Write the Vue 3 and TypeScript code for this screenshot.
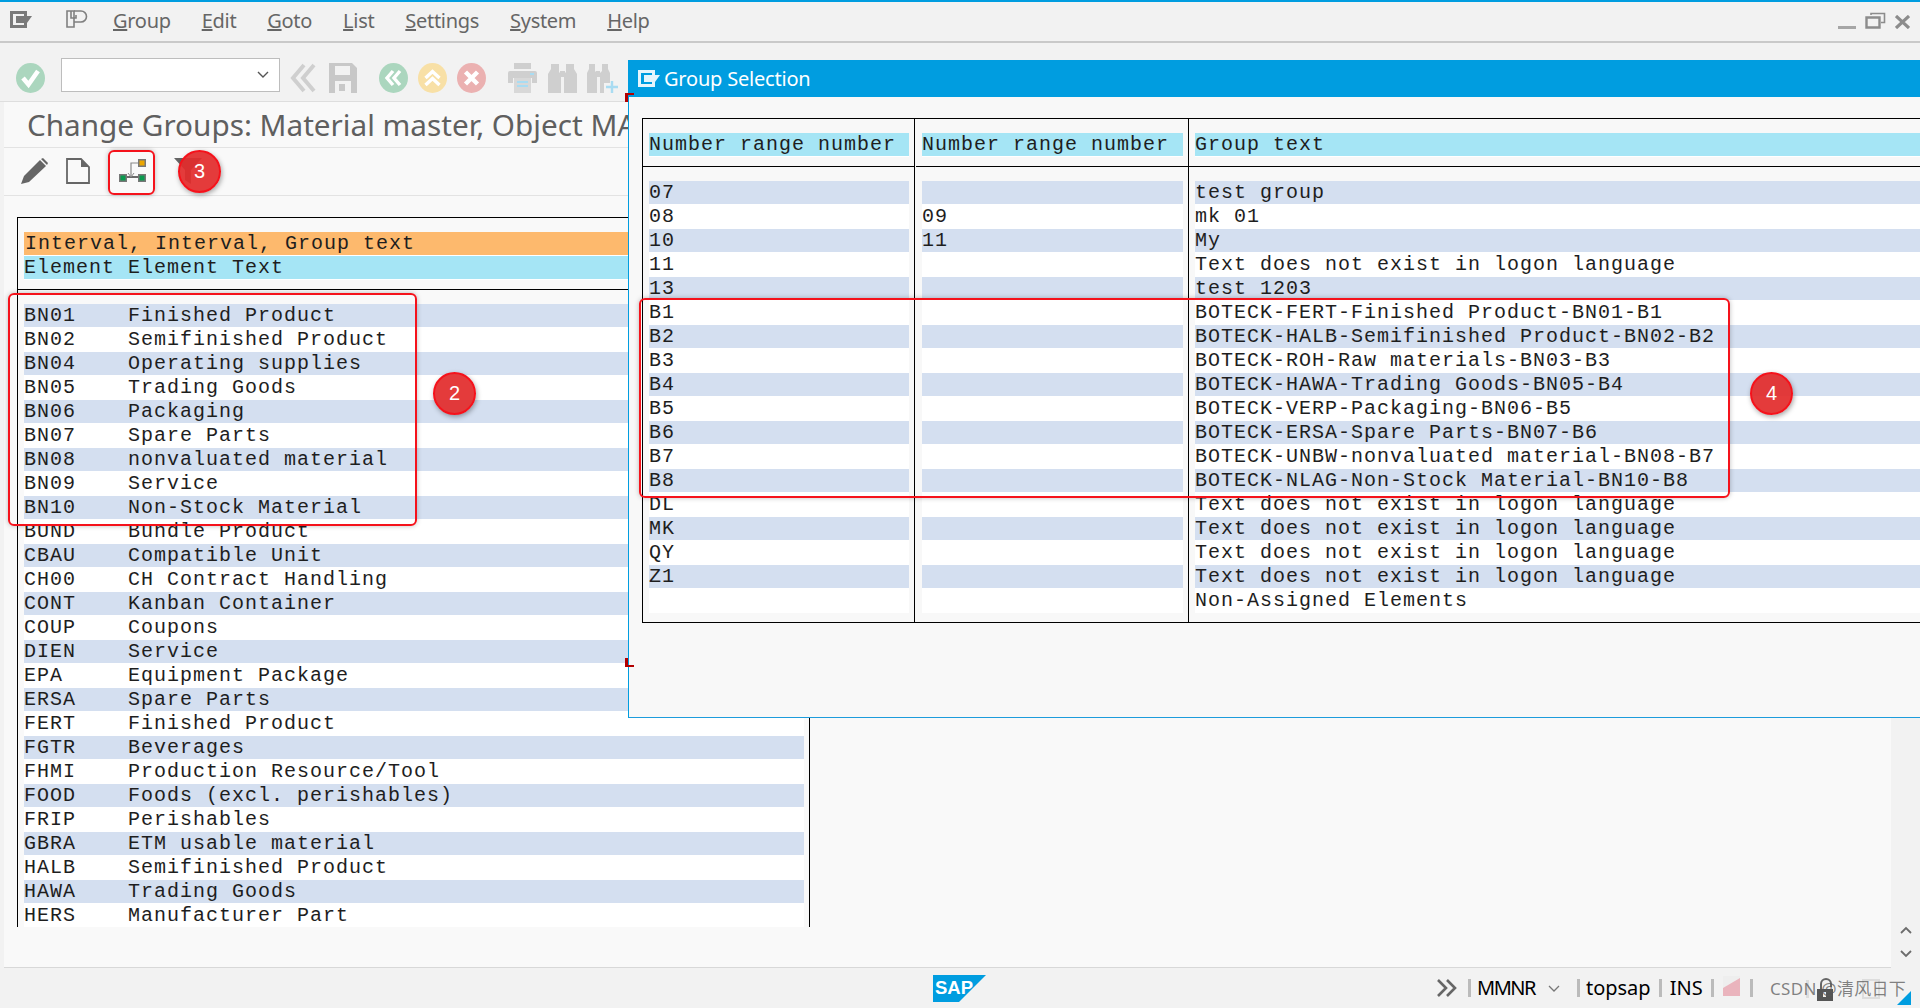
<script setup lang="ts">
interface DialogRow { a: string; b: string; c: string }

const menus: string[] = ['Group', 'Edit', 'Goto', 'List', 'Settings', 'System', 'Help']

const leftRows: string[] = [
  'BN01    Finished Product', 'BN02    Semifinished Product', 'BN04    Operating supplies',
  'BN05    Trading Goods', 'BN06    Packaging', 'BN07    Spare Parts', 'BN08    nonvaluated material',
  'BN09    Service', 'BN10    Non-Stock Material', 'BUND    Bundle Product', 'CBAU    Compatible Unit',
  'CH00    CH Contract Handling', 'CONT    Kanban Container', 'COUP    Coupons', 'DIEN    Service',
  'EPA     Equipment Package', 'ERSA    Spare Parts', 'FERT    Finished Product', 'FGTR    Beverages',
  'FHMI    Production Resource/Tool', 'FOOD    Foods (excl. perishables)', 'FRIP    Perishables',
  'GBRA    ETM usable material', 'HALB    Semifinished Product', 'HAWA    Trading Goods', 'HERS    Manufacturer Part',
]

const noText = 'Text does not exist in logon language'
const dialogRows: DialogRow[] = [
  { a: '07', b: '', c: 'test group' }, { a: '08', b: '09', c: 'mk 01' }, { a: '10', b: '11', c: 'My' },
  { a: '11', b: '', c: noText }, { a: '13', b: '', c: 'test 1203' },
  { a: 'B1', b: '', c: 'BOTECK-FERT-Finished Product-BN01-B1' },
  { a: 'B2', b: '', c: 'BOTECK-HALB-Semifinished Product-BN02-B2' },
  { a: 'B3', b: '', c: 'BOTECK-ROH-Raw materials-BN03-B3' },
  { a: 'B4', b: '', c: 'BOTECK-HAWA-Trading Goods-BN05-B4' },
  { a: 'B5', b: '', c: 'BOTECK-VERP-Packaging-BN06-B5' },
  { a: 'B6', b: '', c: 'BOTECK-ERSA-Spare Parts-BN07-B6' },
  { a: 'B7', b: '', c: 'BOTECK-UNBW-nonvaluated material-BN08-B7' },
  { a: 'B8', b: '', c: 'BOTECK-NLAG-Non-Stock Material-BN10-B8' },
  { a: 'DL', b: '', c: noText }, { a: 'MK', b: '', c: noText }, { a: 'QY', b: '', c: noText }, { a: 'Z1', b: '', c: noText },
  { a: '', b: '', c: 'Non-Assigned Elements' },
]

const dialogCols: { key: keyof DialogRow; head: string; cls: string }[] = [
  { key: 'a', head: 'Number range number', cls: 'c1' },
  { key: 'b', head: 'Number range number', cls: 'c2' },
  { key: 'c', head: 'Group text', cls: 'c3' },
]
</script>

<template>
  <div class="app">
    <div class="topline"></div>

    <header class="menubar">
      <svg class="m-ico1" width="22" height="17" viewBox="0 0 22 17">
        <path d="M1.5 1.5h14v14h-14z" fill="#f2f2f2" stroke="#7a7a7a" stroke-width="3" />
        <path d="M6 5h16l-5 7H6z" fill="#7a7a7a" />
      </svg>
      <svg class="m-ico2" width="22" height="18" viewBox="0 0 22 18" fill="none" stroke="#808080" stroke-width="1.6">
        <path d="M1 1h7v16H1z" />
        <path d="M8 1h7a5.5 5.5 0 0 1 0 11H8" />
        <path d="M5 1v7h5V5" />
      </svg>
      <nav class="menus">
        <span v-for="m in menus" :key="m" class="menu"><u>{{ m[0] }}</u>{{ m.slice(1) }}</span>
      </nav>
      <div class="winctl">
        <svg width="18" height="4" viewBox="0 0 18 4"><rect width="18" height="3" y="1" fill="#a6a6a6" /></svg>
        <svg width="21" height="17" viewBox="0 0 21 17" fill="none" stroke="#8c8c8c" stroke-width="2.4">
          <path d="M1.5 5.5h13v10h-13z" /><path d="M6 3V1.5h13.5v9H16" stroke-width="1.6" />
        </svg>
        <svg width="15" height="14" viewBox="0 0 15 14" fill="none" stroke="#8c8c8c" stroke-width="3.2">
          <path d="M1 1l13 12M14 1L1 13" />
        </svg>
      </div>
    </header>
    <div class="menushadow"></div>

    <div class="toolbar">
      <svg class="ic" width="29" height="30" viewBox="0 0 29 30">
        <ellipse cx="14.5" cy="15" rx="14.5" ry="15" fill="#abd6be" />
        <path d="M7 15l5.5 6.5L22 8" fill="none" stroke="#fff" stroke-width="4.6" />
      </svg>
      <div class="combo">
        <svg width="12" height="8" viewBox="0 0 12 8" fill="none" stroke="#555" stroke-width="1.4"><path d="M1 1l5 5 5-5" /></svg>
      </div>
      <svg class="ic back" width="26" height="30" viewBox="0 0 26 30" fill="none" stroke="#cfcfcf" stroke-width="4">
        <path d="M14 2L3 15l11 13M24 2L13 15l11 13" />
      </svg>
      <svg class="ic save" width="28" height="30" viewBox="0 0 28 30">
        <path d="M0 0h23l5 5v25H0z" fill="#c8c8c8" />
        <path d="M6 3h15v9H6z" fill="#f2f2f2" />
        <path d="M6 18h16v12H6z" fill="#f2f2f2" />
        <path d="M10 21h6v7h-6z" fill="#c8c8c8" />
      </svg>
      <svg class="ic nav1" width="29" height="30" viewBox="0 0 29 30">
        <ellipse cx="14.5" cy="15" rx="14.5" ry="15" fill="#abd6be" />
        <path d="M14 8l-6 7 6 7M21 8l-6 7 6 7" fill="none" stroke="#fff" stroke-width="3.4" />
      </svg>
      <svg class="ic nav2" width="29" height="30" viewBox="0 0 29 30">
        <ellipse cx="14.5" cy="15" rx="14.5" ry="15" fill="#f8e0a6" />
        <path d="M7.5 15l7-6.5 7 6.5M7.5 22l7-6.5 7 6.5" fill="none" stroke="#fff" stroke-width="3.4" />
      </svg>
      <svg class="ic nav2" width="29" height="30" viewBox="0 0 29 30">
        <ellipse cx="14.5" cy="15" rx="14.5" ry="15" fill="#ebb1b1" />
        <path d="M8.5 9l12 12M20.5 9l-12 12" fill="none" stroke="#fff" stroke-width="4.4" />
      </svg>
      <svg class="ic print" width="29" height="30" viewBox="0 0 29 30">
        <path d="M6 0h17v6H6z" fill="#cfcfcf" />
        <path d="M2 8h25a2 2 0 0 1 2 2v10h-5v-5H5v5H0V10a2 2 0 0 1 2-2z" fill="#cfcfcf" />
        <path d="M6 15h17v15H6z" fill="#d8d8d8" />
        <path d="M9 19h11M9 23h11" stroke="#a9dcf2" stroke-width="2" />
        <path d="M22 10h4v2h-4z" fill="#a9dcf2" />
      </svg>
      <svg class="ic bino" width="29" height="30" viewBox="0 0 29 30" fill="#cfcfcf">
        <path d="M3 1h8v8l2 2v19H0V11l3-5z" />
        <path d="M18 1h8v5l3 5v19H16V11l2-2z" />
        <path d="M12 8h5v6h-5z" />
      </svg>
      <svg class="ic bino2" width="33" height="30" viewBox="0 0 33 30">
        <g fill="#cfcfcf">
          <path d="M2 1h6v7l2 2v20H0V10l2-4z" />
          <path d="M15 1h6v5l2 4v10h-6v10h-4V10l2-2z" />
          <path d="M9 8h4v6H9z" />
        </g>
        <path d="M25 18v12M19 24h12" stroke="#a9dcf2" stroke-width="2.4" />
      </svg>
    </div>

    <div class="workspace">
      <main class="main">
        <h1 class="title">Change Groups: Material master, Object MA</h1>
        <div class="apptools">
          <svg class="pencil" width="27" height="26" viewBox="0 0 27 26">
            <path d="M19 2l6 6L8 24 0 26l3-8z" fill="#666" />
            <path d="M20 1l2-1 5 5-1 2z" fill="#666" />
          </svg>
          <svg class="doc" width="24" height="26" viewBox="0 0 24 26" fill="none" stroke="#666" stroke-width="1.8">
            <path d="M1 1h14l8 8v16H1z" />
            <path d="M15 1l8 8h-8z" fill="#666" stroke="none" />
          </svg>
          <svg class="tree" width="27" height="25" viewBox="0 0 27 25">
            <path d="M12 19V5h8" fill="none" stroke="#8a8a8a" stroke-width="1.2" />
            <path d="M4 19h20" stroke="#6a6a6a" stroke-width="2" />
            <path d="M9 15l3 4 3-4" fill="none" stroke="#8a8a8a" stroke-width="1" />
            <rect x="19" y="1" width="8" height="8" fill="#777" /><rect x="20.5" y="2.5" width="5" height="5" fill="#eba600" />
            <rect y="16" width="8" height="8" fill="#777" /><rect x="1.5" y="17.5" width="5" height="5" fill="#0a9a4e" />
            <rect x="19" y="16" width="8" height="8" fill="#777" /><rect x="20.5" y="17.5" width="5" height="5" fill="#0a9a4e" />
          </svg>
          <svg class="filter" width="28" height="26" viewBox="0 0 28 26">
            <path d="M0 0h28L17 12v14l-6-4V12z" fill="#666" />
          </svg>
        </div>

        <section class="listing">
          <div class="ltable">
            <div class="lhead">
              <div class="cell orange">Interval, Interval, Group text</div>
              <div class="cell cyan">Element Element Text</div>
            </div>
            <div class="lbody">
              <div v-for="(r, i) in leftRows" :key="r" class="cell" :class="i % 2 === 0 ? 'alt' : 'plain'">{{ r }}</div>
            </div>
          </div>
        </section>
      </main>
      <aside class="scroll">
        <svg width="12" height="8" viewBox="0 0 12 8" fill="none" stroke="#6c6c6c" stroke-width="1.8"><path d="M1 7l5-5 5 5" /></svg>
        <svg width="12" height="8" viewBox="0 0 12 8" fill="none" stroke="#6c6c6c" stroke-width="1.8"><path d="M1 1l5 5 5-5" /></svg>
      </aside>
    </div>

    <footer class="status">
      <svg class="sap" width="53" height="27" viewBox="0 0 53 27">
        <path d="M0 0h53L26 27H0z" fill="#009de0" />
        <text x="2" y="19" font-family="Liberation Sans, sans-serif" font-size="18" font-weight="700" textLength="38" lengthAdjust="spacingAndGlyphs" fill="#fff">SAP</text>
      </svg>
      <svg class="chev" width="20" height="20" viewBox="0 0 20 20" fill="none" stroke="#666" stroke-width="2.6">
        <path d="M1 2l8 8-8 8M10 2l8 8-8 8" />
      </svg>
      <i class="sep s1"></i>
      <span class="st mm">MMNR</span>
      <svg class="dd" width="12" height="7" viewBox="0 0 12 7" fill="none" stroke="#777" stroke-width="1.3"><path d="M1 1l5 5 5-5" /></svg>
      <i class="sep s2"></i>
      <span class="st top">topsap</span>
      <i class="sep s3"></i>
      <span class="st ins">INS</span>
      <i class="sep s3"></i>
      <svg class="flag" width="17" height="20" viewBox="0 0 17 20"><path d="M0 0h17v20H0z" fill="#eee" /><path d="M0 20V12L17 2v18z" fill="#eab4bd" /></svg>
      <i class="sep s4"></i>
    </footer>

    <span class="tri"></span>
    <i class="fade-sep"></i>
    <i class="fade-box"></i>
    <svg class="lock" width="16" height="23" viewBox="0 0 16 23">
      <path d="M4 12V6a5 5 0 0 1 10 0v3" fill="none" stroke="#666" stroke-width="2" />
      <path d="M0 11h16v12H0z" fill="#555" /><path d="M6 14h3v5H6z" fill="#f2f2f2" />
    </svg>
    <span class="watermark">CSDN @清风日下</span>

    <section class="dialog">
      <div class="dlg-title">
        <svg width="22" height="17" viewBox="0 0 22 17">
          <path d="M1.5 1.5h14v14h-14z" fill="#009de0" stroke="#e6f5fc" stroke-width="3" />
          <path d="M6 5h16l-5 7H6z" fill="#e6f5fc" />
        </svg>
        <span>Group Selection</span>
      </div>
      <div class="dlg-body">
        <div class="dtable">
          <div v-for="c in dialogCols" :key="c.key" class="dcol" :class="c.cls">
            <div class="dhead"><div class="cell cyan">{{ c.head }}</div></div>
            <div class="dbody">
              <div v-for="(r, i) in dialogRows" :key="i" class="cell" :class="i % 2 === 0 ? 'alt' : 'plain'">{{ r[c.key] }}</div>
            </div>
          </div>
        </div>
      </div>
    </section>
    <i class="corner ctop"></i>
    <i class="corner cbot"></i>

    <div class="note r2"></div>
    <div class="note r3"></div>
    <div class="note r4"></div>
    <span class="badge b3">3</span>
    <span class="badge b2">2</span>
    <span class="badge b4">4</span>
  </div>
</template>

<style scoped>
.app {
  position: relative;
  width: 1920px;
  height: 1008px;
  overflow: hidden;
  display: flex;
  flex-direction: column;
  background: #f2f2f2;
  font-family: "Noto Sans", "Open Sans", sans-serif;
}
.topline { height: 2px; background: #009de0; flex: none; }
.menubar {
  height: 39px;
  flex: none;
  display: flex;
  align-items: center;
  padding-left: 10px;
  color: #666;
  font-size: 20px;
}
.m-ico1 { margin-top: -5px; }
.m-ico2 { margin: -5px 0 0 34px; }
.menus { display: flex; gap: 31px; margin: -2px 0 0 25px; letter-spacing: -0.3px; }
.winctl { margin-left: auto; display: flex; align-items: flex-end; gap: 9px; padding: 0 10px 12px 0; margin-top: auto; }
.menushadow { height: 2px; flex: none; background: #c9c9c9; }

.toolbar {
  height: 38px;
  flex: none;
  display: flex;
  align-items: flex-start;
  padding: 20px 0 0 16px;
  border-bottom: 1px solid #dedede;
}
.ic { flex: none; }
.combo {
  width: 219px;
  height: 34px;
  box-sizing: border-box;
  margin: -5px 0 0 16px;
  background: #fff;
  border: 1px solid #bdbdbd;
  display: flex;
  align-items: center;
  justify-content: flex-end;
  padding-right: 10px;
}
.back { margin-left: 10px; }
.save { margin-left: 13px; }
.nav1 { margin-left: 22px; }
.nav2 { margin-left: 10px; }
.print { margin-left: 22px; }
.bino { margin-left: 11px; }
.bino2 { margin-left: 10px; }

.workspace { flex: 1; min-height: 0; display: flex; }
.main {
  flex: 1;
  min-width: 0;
  margin-left: 4px;
  background: #f9f9f9;
  display: flex;
  flex-direction: column;
  border-bottom: 1px solid #d8d8d8;
}
.scroll {
  width: 29px;
  flex: none;
  display: flex;
  flex-direction: column;
  justify-content: flex-end;
  align-items: center;
  gap: 16px;
  padding-bottom: 10px;
  box-sizing: border-box;
}
.title {
  margin: 0;
  height: 45px;
  padding-left: 23px;
  font-size: 29.7px;
  font-weight: 400;
  line-height: 45px;
  color: #5f5f5f;
  white-space: nowrap;
  overflow: hidden;
  width: 601px;
  flex: none;
}
.apptools {
  height: 47px;
  flex: none;
  display: flex;
  align-items: center;
  padding-left: 17px;
  border-top: 1px solid #e3e3e3;
  border-bottom: 1px solid #e3e3e3;
}
.pencil { margin-top: -1px; }
.doc { margin: -1px 0 0 18px; }
.tree { margin: -2px 0 0 29px; }
.filter { margin: -1px 0 0 28px; }

.listing { flex: 1; padding: 21px 0 0 13px; }
.ltable {
  width: 793px;
  height: 710px;
  overflow: hidden;
  border: 1px solid #000;
  border-bottom: 0;
  padding: 0 5px 0 6px;
  box-sizing: border-box;
  background: #f9f9f9;
}
.lhead { padding: 14px 5px 9px 6px; margin: 0 -5px 0 -6px; border-bottom: 1px solid #000; }
.lbody { padding: 14px 0 0; }

.cell {
  height: 24px;
  box-sizing: border-box;
  font-family: "Liberation Mono", monospace;
  font-size: 20px;
  letter-spacing: 1px;
  line-height: 24px;
  white-space: pre;
  color: #1e1e1e;
  overflow: hidden;
}
.alt { background: #d4dff0; border-bottom: 1px solid #fff; }
.plain { background: #fff; }
.orange { background: #fdb96d; border-bottom: 1px solid #fff; padding-left: 1px; }
.cyan { background: #a5e5f5; border-bottom: 1px solid #fff; }

.status {
  height: 40px;
  flex: none;
  display: flex;
  align-items: center;
  padding-left: 933px;
  color: #000;
  font-size: 20px;
}
.st { line-height: 28px; flex: none; }
.sap { margin: 1px 0 0; }
.chev { margin-left: 451px; }
.sep { width: 3px; height: 18px; background: #bbb; flex: none; }
.s1 { margin: 0 6px 0 11px; }
.mm { letter-spacing: -1.5px; }
.s2 { margin-left: 17px; }
.s3 { margin: 0 8px 0 8px; }
.s4 { margin-left: 10px; }
.dd { margin-left: 13px; }
.top { margin-left: 6px; }
.flag { margin: -4px 0 0 1px; }

.tri {
  position: absolute;
  left: 1897px;
  top: 991px;
  width: 14px;
  height: 14px;
  background: #009de0;
  clip-path: polygon(100% 0, 100% 100%, 0 100%);
}
.fade-sep { position: absolute; left: 1806px; top: 980px; width: 3px; height: 18px; background: #ddd; }
.fade-box { position: absolute; left: 1862px; top: 979px; width: 18px; height: 20px; box-sizing: border-box; border: 2px solid #ddd; }
.lock { position: absolute; left: 1817px; top: 978px; }
.watermark {
  position: absolute;
  left: 1770px;
  top: 976px;
  font-family: "Noto Sans", "Noto Sans CJK SC", sans-serif;
  font-size: 17px;
  letter-spacing: 0.3px;
  line-height: 26px;
  color: rgba(90, 90, 90, 0.75);
  white-space: nowrap;
}

.dialog {
  position: absolute;
  left: 628px;
  top: 60px;
  width: 1292px;
  height: 658px;
  box-sizing: border-box;
  border-left: 1px solid #009de0;
  border-bottom: 1px solid #1d9cdc;
  background: #f8f8f8;
  display: flex;
  flex-direction: column;
}
.dlg-title {
  height: 37px;
  flex: none;
  margin-left: -1px;
  background: #009de0;
  display: flex;
  align-items: center;
  gap: 4px;
  padding-left: 10px;
  color: #fff;
  font-size: 20px;
  letter-spacing: -0.2px;
}
.dlg-body { padding: 21px 0 0 13px; }
.dtable {
  display: flex;
  width: 1400px;
  border-top: 1px solid #000;
  border-bottom: 1px solid #000;
}
.dcol { border-left: 1px solid #000; box-sizing: border-box; flex: none; }
.c1 { width: 272px; padding: 0 5px 0 6px; }
.c2 { width: 274px; padding: 0 5px 0 7px; }
.c3 { width: 854px; padding: 0 0 0 6px; }
.dhead { padding: 14px 6px 9px; margin: 0 -6px; border-bottom: 1px solid #000; }
.dbody { padding: 14px 0 9px; }

.corner { position: absolute; left: 625px; width: 9px; height: 9px; box-sizing: border-box; border-left: 3px solid #b30000; }
.ctop { top: 93px; border-top: 2px solid #b30000; }
.cbot { top: 658px; border-bottom: 2px solid #b30000; }

.note {
  position: absolute;
  box-sizing: border-box;
  border: 2px solid #f5121b;
  border-radius: 6px;
  box-shadow: 0 0 5px rgba(0, 0, 0, 0.25);
}
.r2 { left: 8px; top: 293px; width: 409px; height: 233px; }
.r3 { left: 108px; top: 150px; width: 47px; height: 45px; }
.r4 { left: 639px; top: 298px; width: 1091px; height: 200px; }
.badge {
  position: absolute;
  width: 43px;
  height: 43px;
  box-sizing: border-box;
  border-radius: 50%;
  background: rgba(226, 44, 44, 0.93);
  border: 2px solid #f5121b;
  box-shadow: 1px 2px 5px rgba(0, 0, 0, 0.35);
  color: #fff;
  font-family: "Liberation Sans", sans-serif;
  font-size: 20px;
  line-height: 39px;
  text-align: center;
}
.b3 { left: 178px; top: 150px; }
.b2 { left: 433px; top: 372px; }
.b4 { left: 1750px; top: 372px; }
</style>

<style>
body { margin: 0; overflow: hidden; }
</style>
